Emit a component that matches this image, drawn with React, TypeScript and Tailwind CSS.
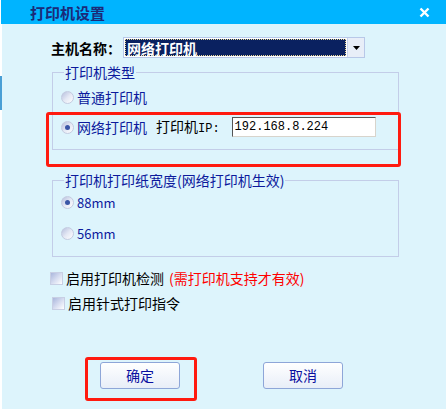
import React from "react";

const cjk = {
  fontFamily: '"Noto Sans CJK SC", "Liberation Sans", sans-serif',
};

const Radio = ({ checked }: { checked?: boolean }) => (
  <span className="relative flex h-[13px] w-[13px] shrink-0 items-center justify-center rounded-full border border-[#c4cbe0] bg-gradient-to-br from-[#b7c0de] via-[#e4e8f4] to-white">
    {checked && <span className="h-[5px] w-[5px] rounded-full bg-[#3a56a6]" />}
  </span>
);

const Checkbox = () => (
  <span className="h-[13px] w-[13px] shrink-0 border border-[#c8cfe4] bg-gradient-to-br from-[#aab6dc] via-[#d6dcf0] to-white" />
);

const CloseIcon = () => (
  <svg width="11" height="11" viewBox="0 0 11 11">
    <path d="M1.5 1.5 L9.5 9.5 M9.5 1.5 L1.5 9.5" stroke="#fff" strokeWidth="2.4" />
  </svg>
);

export default function App() {
  return (
    <div className="relative h-[416px] w-[447px] bg-white" style={cjk}>
      {/* title bar */}
      <div className="ml-[1px] mr-[1px] flex h-[24px] items-center justify-between bg-[#00b4ff] pl-[29px] pr-[16px]">
        <span className="text-[15px] font-bold leading-none text-[#1b2a78]">打印机设置</span>
        <CloseIcon />
      </div>

      {/* left edge marker */}
      <div className="absolute left-0 top-[76px] h-[34px] w-[2px] bg-[#4a9fd5]" />

      {/* body */}
      <div className="ml-[2px] mr-[1px] h-[385px] bg-[#ddf4fc] pt-[13px]">
        {/* host name row */}
        <div className="flex h-[21px] items-center pl-[49px]">
          <span className="text-[14px] font-bold leading-none text-black">主机名称：</span>
          <div className="ml-[2px] flex h-[21px] w-[242px] border border-[#b8c8e8] bg-white">
            <div className="m-[1px] flex flex-1 items-center border border-dotted border-[#e8d89a] bg-[#0a2160] pl-[1px] text-[14px] font-bold leading-none text-white">
              网络打印机
            </div>
            <div className="flex w-[17px] items-center justify-center border-l border-[#c8d4ec] bg-[#e8eef8]">
              <svg width="7" height="4" viewBox="0 0 7 4">
                <path d="M0 0 H7 L3.5 4 Z" fill="#000" />
              </svg>
            </div>
          </div>
        </div>

        {/* printer type group */}
        <fieldset className="ml-[50px] mt-[6px] w-[347px] border border-[#c3cde8] pb-[12px] pl-[8px] pt-[7px]">
          <legend className="ml-[3px] px-[1px] text-[14px] leading-[16px] text-[#0c1a9c]">打印机类型</legend>
          <div className="flex h-[20px] items-center gap-[3px]">
            <Radio />
            <span className="text-[14px] leading-none text-[#0c1a9c]">普通打印机</span>
          </div>
          <div className="mt-[10px] flex h-[20px] items-center">
            <Radio checked />
            <span className="ml-[3px] text-[14px] leading-none text-[#0c1a9c]">网络打印机</span>
            <span className="ml-[9px] text-[14px] leading-none text-black">
              打印机<span style={{ fontFamily: '"Liberation Mono", monospace' }} className="text-[12px]">IP:</span>
            </span>
            <div
              className="ml-[12px] flex h-[20px] w-[144px] items-center border border-t-[#555] border-l-[#555] border-r-[#d8d4cc] border-b-[#d8d4cc] bg-white pl-[2px] text-[12px] text-black"
              style={{ fontFamily: '"Liberation Mono", monospace' }}
            >
              192.168.8.224
            </div>
          </div>
        </fieldset>

        {/* paper width group */}
        <fieldset className="ml-[50px] mt-[22px] w-[347px] border border-[#c3cde8] pb-[13px] pl-[8px] pt-[4px]">
          <legend className="ml-[3px] px-[1px] text-[14px] leading-[16px] text-[#0c1a9c]">
            打印机打印纸宽度(网络打印机生效)
          </legend>
          <div className="flex h-[20px] items-center gap-[3px]">
            <Radio checked />
            <span className="text-[13px] leading-none text-[#0c1a9c]">88mm</span>
          </div>
          <div className="mt-[11px] flex h-[20px] items-center gap-[3px]">
            <Radio />
            <span className="text-[13px] leading-none text-[#0c1a9c]">56mm</span>
          </div>
        </fieldset>

        {/* checkboxes */}
        <div className="ml-[48px] mt-[11px] flex h-[20px] items-center gap-[3px]">
          <Checkbox />
          <span className="text-[14px] leading-none text-black">启用打印机检测</span>
          <span className="ml-[2px] text-[14px] leading-none text-[#ff0000]">(需打印机支持才有效)</span>
        </div>
        <div className="ml-[50px] mt-[5px] flex h-[20px] items-center gap-[3px]">
          <Checkbox />
          <span className="text-[14px] leading-none text-black">启用针式打印指令</span>
        </div>

        {/* buttons */}
        <div className="ml-[98px] mt-[49px] flex gap-[83px]">
          <button className="h-[27px] w-[80px] rounded-[3px] border border-[#8ea6d8] bg-gradient-to-b from-white to-[#e8eef8] text-[14px] text-[#0a10a0]">
            确定
          </button>
          <button className="h-[27px] w-[80px] rounded-[3px] border border-[#8ea6d8] bg-gradient-to-b from-white to-[#e8eef8] text-[14px] text-[#0a10a0]">
            取消
          </button>
        </div>
      </div>

      {/* red highlight annotations */}
      <div className="pointer-events-none absolute left-[46px] top-[112px] h-[55px] w-[355px] rounded-[3px] border-[3px] border-[#ff1a0f]" />
      <div className="pointer-events-none absolute left-[85px] top-[357px] h-[44px] w-[112px] rounded-[3px] border-[3px] border-[#ff1a0f]" />
    </div>
  );
}
